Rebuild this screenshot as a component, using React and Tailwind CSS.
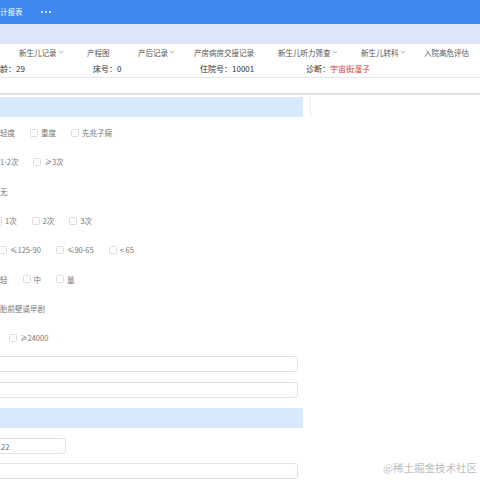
const font = { fontFamily: '"Noto Sans CJK SC", "Liberation Sans", sans-serif' };

const tabs = [
  { label: "新生儿记录", drop: true, w: "w-[68px]" },
  { label: "产程图", w: "w-[51px]" },
  { label: "产后记录", drop: true, w: "w-[56px]" },
  { label: "产房病房交接记录", w: "w-[84px]" },
  { label: "新生儿听力筛查", drop: true, w: "w-[83px]" },
  { label: "新生儿转科", drop: true, w: "w-[63px]" },
  { label: "入院高危评估", w: "w-[56px]" },
];

const rows = [
  { shift: "ml-0", items: [{ label: "轻度", box: false }, { label: "重度" }, { label: "先兆子痫" }] },
  { shift: "ml-0", items: [{ label: "1-2次", box: false }, { label: "≥3次" }] },
  { shift: "ml-0", items: [{ label: "无", box: false }] },
  { shift: "-ml-[6px]", items: [{ label: "1次" }, { label: "2次" }, { label: "3次" }] },
  { shift: "-ml-[1px]", items: [{ label: "≤125-90" }, { label: "≤90-65" }, { label: "< 65" }] },
  { shift: "ml-0", items: [{ label: "轻", box: false }, { label: "中" }, { label: "量" }] },
  { shift: "ml-0", items: [{ label: "胎前壁或早剧", box: false }] },
  { shift: "ml-[9px]", items: [{ label: "≥24000" }] },
];

function Caret() {
  return (
    <svg viewBox="0 0 10 10" className="w-[6px] h-[6px] ml-[1px] mb-[2px] shrink-0" aria-hidden="true">
      <path d="M1.5 3.5 5 7l3.5-3.5" fill="none" stroke="#888" strokeWidth="1.1" />
    </svg>
  );
}

function Check({ label, box = true }) {
  return (
    <span className="flex items-center gap-[3px] mr-[15px] whitespace-nowrap">
      {box && <span className="w-[8px] h-[8px] border border-[#dcdcdc] rounded-[1.5px] bg-white" />}
      <span className="text-[7.5px] text-[#777]">{label}</span>
    </span>
  );
}

function Input({ width = "w-[308px]", value }) {
  return (
    <div className={`${width} h-[16px] -ml-[10px] pl-[10px] border border-[#e3e3e3] rounded-[3px] flex items-center bg-white`}>
      {value && <span className="text-[7.5px] text-[#666]">{value}</span>}
    </div>
  );
}

export default function App() {
  return (
    <div className="w-[480px] h-[480px] overflow-hidden bg-white relative" style={font}>
      <div className="h-[24px] bg-[#4087f0] flex items-center text-white">
        <span className="text-[7.5px]">计报表</span>
        <span className="flex gap-[2px] ml-[18px]">
          <span className="w-[2px] h-[2px] rounded-full bg-white" />
          <span className="w-[2px] h-[2px] rounded-full bg-white" />
          <span className="w-[2px] h-[2px] rounded-full bg-white" />
        </span>
      </div>
      <div className="h-[20px] bg-[#dde6f8]" />

      <div className="h-[17px] flex items-center pl-[19px] text-[7.5px] text-[#555] whitespace-nowrap">
        {tabs.map((t) => (
          <span key={t.label} className={`flex items-center shrink-0 ${t.w}`}>
            {t.label}
            {t.drop && <Caret />}
          </span>
        ))}
      </div>

      <div className="h-[17px] grid grid-cols-[93px_107px_106px_1fr] items-center text-[8px] text-[#333] border-b border-[#e6e6e6] whitespace-nowrap">
        <span>龄：29</span>
        <span>床号：0</span>
        <span>住院号：10001</span>
        <span>
          诊断：<span className="text-[#d9363e]">宇宙街溜子</span>
        </span>
      </div>

      <div className="h-[17px] border-b-2 border-[#e0e0e0]" />

      <div className="flex">
        <div className="w-[303px] pt-[2px]">
          <div className="h-[20px] bg-[#d7e9fb]" />
          <div className="flex flex-col pt-[1px]">
            {rows.map((r, i) => (
              <div key={i} className={`h-[29.3px] flex items-center ${r.shift}`}>
                {r.items.map((it) => (
                  <Check key={it.label} {...it} />
                ))}
              </div>
            ))}
          </div>
          <div className="flex flex-col gap-[10px] mt-[4px]">
            <Input />
            <Input />
          </div>
          <div className="h-[20px] bg-[#d7e9fb] mt-[10px]" />
          <div className="flex flex-col gap-[9px] mt-[10px]">
            <Input width="w-[76px]" value="22" />
            <Input />
          </div>
        </div>
        <div className="w-[1px] h-[22px] bg-[#f0f0f0] ml-[7px]" />
      </div>

      <span className="absolute right-[3px] bottom-[4px] text-[10.5px] text-[#bdbdbd]">@稀土掘金技术社区</span>
    </div>
  );
}
